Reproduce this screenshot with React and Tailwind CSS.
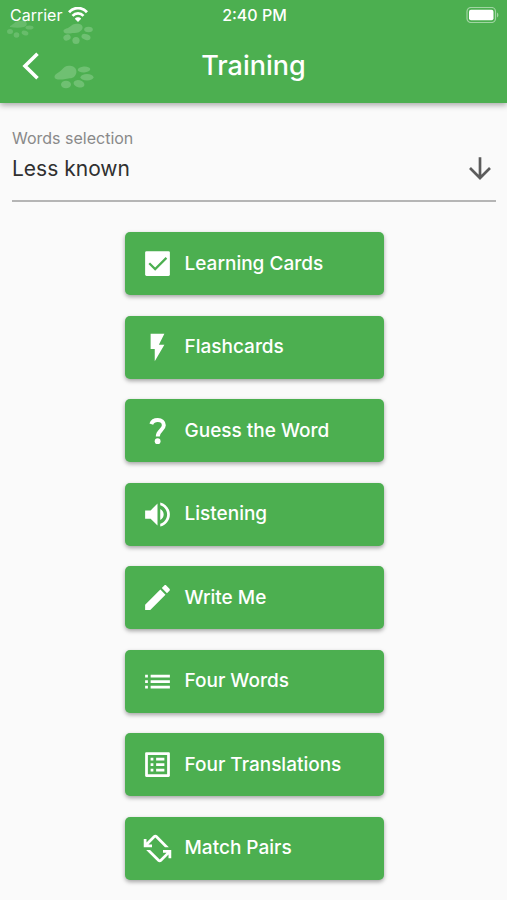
import React from "react";

const iconClass = "h-[33px] w-[33px] shrink-0";

function Glyph({ d }) {
  return (
    <svg viewBox="0 0 24 24" className={iconClass} fill="currentColor" aria-hidden="true">
      <path d={d} />
    </svg>
  );
}

function CheckIcon() {
  return (
    <svg viewBox="0 0 24 24" className={iconClass} aria-hidden="true">
      <rect x="3" y="3" width="18" height="18" rx="1" fill="currentColor" />
      <path d="M6 11.8l4.3 4.3 8.2-8.2" fill="none" stroke="#4caf50" strokeWidth="1.6" />
    </svg>
  );
}

function QuestionIcon() {
  return (
    <svg viewBox="0 0 24 24" className={iconClass} aria-hidden="true">
      <path
        d="M7.500 7.400C8.200 5.400 10 4.400 12.200 4.400c2.700 0 4.400 1.500 4.400 3.800 0 3.400-4.400 3.800-4.400 8.200"
        fill="none"
        stroke="currentColor"
        strokeWidth="2.900"
      />
      <circle cx="12.1" cy="19.8" r="2.100" fill="currentColor" />
    </svg>
  );
}

const trainings = [
  { label: "Learning Cards", icon: <CheckIcon /> },
  { label: "Flashcards", icon: <Glyph d="M7 2v11h3v9l7-12h-4l4-8z" /> },
  { label: "Guess the Word", icon: <QuestionIcon /> },
  {
    label: "Listening",
    icon: (
      <Glyph d="M3 9v6h4l5 5V4L7 9H3zm13.5 3c0-1.77-1.02-3.29-2.5-4.03v8.05c1.48-.73 2.5-2.25 2.5-4.02zM14 3.23v2.06c2.89.86 5 3.54 5 6.71s-2.11 5.85-5 6.71v2.06c4.01-.91 7-4.49 7-8.77s-2.99-7.86-7-8.77z" />
    ),
  },
  {
    label: "Write Me",
    icon: (
      <Glyph d="M3 17.25V21h3.75L17.81 9.94l-3.75-3.75L3 17.25zM20.71 7.04c.39-.39.39-1.02 0-1.41l-2.34-2.34c-.39-.39-1.02-.39-1.41 0l-1.83 1.83 3.75 3.75 1.83-1.83z" />
    ),
  },
  {
    label: "Four Words",
    icon: (
      <Glyph d="M3 13h2v-2H3v2zm0 4h2v-2H3v2zm0-8h2V7H3v2zm4 4h14v-2H7v2zm0 4h14v-2H7v2zM7 7v2h14V7H7z" />
    ),
  },
  {
    label: "Four Translations",
    icon: (
      <Glyph d="M19 5v14H5V5h14m1.1-2H3.9c-.5 0-.9.4-.9.9v16.2c0 .4.4.9.9.9h16.2c.4 0 .9-.5.9-.9V3.9c0-.5-.5-.9-.9-.9zM11 7h6v2h-6V7zm0 4h6v2h-6v-2zm0 4h6v2h-6zM7 7h2v2H7zm0 4h2v2H7zm0 4h2v2H7z" />
    ),
  },
  {
    label: "Match Pairs",
    icon: (
      <Glyph d="M4 7.59l5-5c.78-.78 2.05-.78 2.83 0L20.24 11h-2.83L10.4 4 5.41 9H8v2H2V5h2v2.59zM20 19h2v-6h-6v2h2.59l-4.99 5-7.01-7H3.76l8.41 8.41c.78.78 2.05.78 2.83 0l5-5V19z" />
    ),
  },
];

// Faint paw prints behind the status and title bars
function Paws() {
  return (
    <svg
      className="pointer-events-none absolute left-0 top-0 h-[103px] w-[110px]"
      viewBox="0 0 110 103"
      fill="#6fc072"
      aria-hidden="true"
    >
      <g opacity="0.8">
        <path d="M10 26c3-1 5-5 9-5 3 0 4-1 6 0 3 2 2 5-1 6-4 1-9 1-14 0z" />
        <ellipse cx="29.500" cy="27.500" rx="4" ry="2" />
        <ellipse cx="10" cy="31.500" rx="3" ry="2.500" />
        <ellipse cx="16.500" cy="35" rx="2.800" ry="2.800" />
        <ellipse cx="25" cy="33" rx="3.500" ry="2.300" transform="rotate(20 25 33)" />
      </g>
      <path d="M63.500 31c0-2 3-2 6-4 3-3 6-4 10-3 4 1 4 5 1 7-2 2-5 2-8 2-4 1-9 1-9-2z" />
      <ellipse cx="88.500" cy="29.500" rx="4.300" ry="2.800" />
      <ellipse cx="67" cy="37.500" rx="3.700" ry="3" transform="rotate(-20 67 37.500)" />
      <ellipse cx="76" cy="40.500" rx="3.600" ry="3.500" />
      <ellipse cx="86" cy="37" rx="4.700" ry="2.800" transform="rotate(20 86 37)" />
      <path d="M54.500 77c0-3 4-4 7-7 3-4 6-5 10-4 5 1 6 6 4 9-2 4-6 3-10 4-5 1-11 1-11-2z" />
      <ellipse cx="84" cy="69.500" rx="6.300" ry="2.900" transform="rotate(-4 84 69.500)" />
      <ellipse cx="87" cy="77.200" rx="6.500" ry="3.200" />
      <ellipse cx="66" cy="84.500" rx="5" ry="3.800" />
      <ellipse cx="79" cy="83.800" rx="5.500" ry="3.600" transform="rotate(14 79 83.800)" />
    </svg>
  );
}

export default function App() {
  return (
    <div className="flex min-h-screen flex-col bg-[#fafafa] font-[Inter,'Liberation_Sans',sans-serif]">
      <header className="relative bg-[#4caf50] text-white shadow-[0_2px_6px_rgba(0,0,0,0.35)]">
        <Paws />
        <div className="relative grid h-[29px] grid-cols-3 items-center pl-[10px] pr-2">
          <div className="flex items-center gap-[6px] text-[16px] leading-5">
            <span>Carrier</span>
            <svg viewBox="0 0 20 15" className="h-[15px] w-5" fill="none" stroke="currentColor" aria-label="Wi-Fi">
              <path d="M1 5.200C6-.2 14-.2 19 5.200" strokeWidth="2.900" />
              <path d="M4.500 8.800c3-3.200 8-3.200 11 0" strokeWidth="2.700" />
              <path d="M6.800 11.700c1.800-1.900 4.600-1.900 6.400 0L10 15z" fill="currentColor" stroke="none" />
            </svg>
          </div>
          <span className="text-center text-[16px] font-medium leading-5">2:40 PM</span>
          <svg viewBox="0 0 33 16" className="h-4 w-[33px] justify-self-end" aria-label="Battery full">
            <rect x="1" y="0.500" width="28.500" height="15" rx="4" fill="none" stroke="#a0d5a2" strokeWidth="1.200" />
            <rect x="3" y="2.800" width="24.500" height="10.400" rx="2" fill="#fff" />
            <path d="M31 5.500c1.800.8 1.800 4.200 0 5z" fill="#a0d5a2" />
          </svg>
        </div>
        <div className="relative grid h-[74px] grid-cols-[56px_1fr_56px] items-center">
          <button type="button" aria-label="Back" className="flex h-14 items-center pl-[22px]">
            <svg viewBox="0 0 18 28" className="h-7 w-[18px]" fill="none" stroke="currentColor" strokeWidth="3.600" aria-hidden="true">
              <path d="M15.500 1.800L3 14l12.500 12.200" />
            </svg>
          </button>
          <h1 className="text-center text-[27px] font-medium leading-8">Training</h1>
        </div>
      </header>

      <main className="flex flex-1 flex-col pb-5 pl-3 pr-[11px] pt-[25px]">
        <div className="relative mb-[30px] flex flex-col border-b-2 border-[#b5b5b5] pb-[15px]">
          <label htmlFor="selection" className="text-[16px] leading-5 text-[#898989]">
            Words selection
          </label>
          <select
            id="selection"
            className="mt-[5px] h-8 w-full appearance-none bg-transparent p-0 text-[21px] leading-8 text-[#303030] outline-none"
          >
            <option>Less known</option>
          </select>
          <svg
            viewBox="0 0 24 24"
            className="pointer-events-none absolute right-0 top-6 h-8 w-8"
            fill="none"
            stroke="#5c5c5c"
            strokeWidth="2"
            aria-hidden="true"
          >
            <path d="M12 4v15M4.500 12l7.500 7.500 7.500-7.500" />
          </svg>
        </div>

        <div className="mx-auto flex w-full max-w-[259px] flex-1 flex-col justify-between">
          {trainings.map(({ label, icon }) => (
            <button
              key={label}
              type="button"
              className="flex h-[63px] items-center gap-[11px] rounded-[5px] bg-[#4caf50] px-4 text-left text-[19px] font-medium leading-6 text-white shadow-[0_2px_4px_rgba(0,0,0,0.35)]"
            >
              {icon}
              <span>{label}</span>
            </button>
          ))}
        </div>
      </main>
    </div>
  );
}
